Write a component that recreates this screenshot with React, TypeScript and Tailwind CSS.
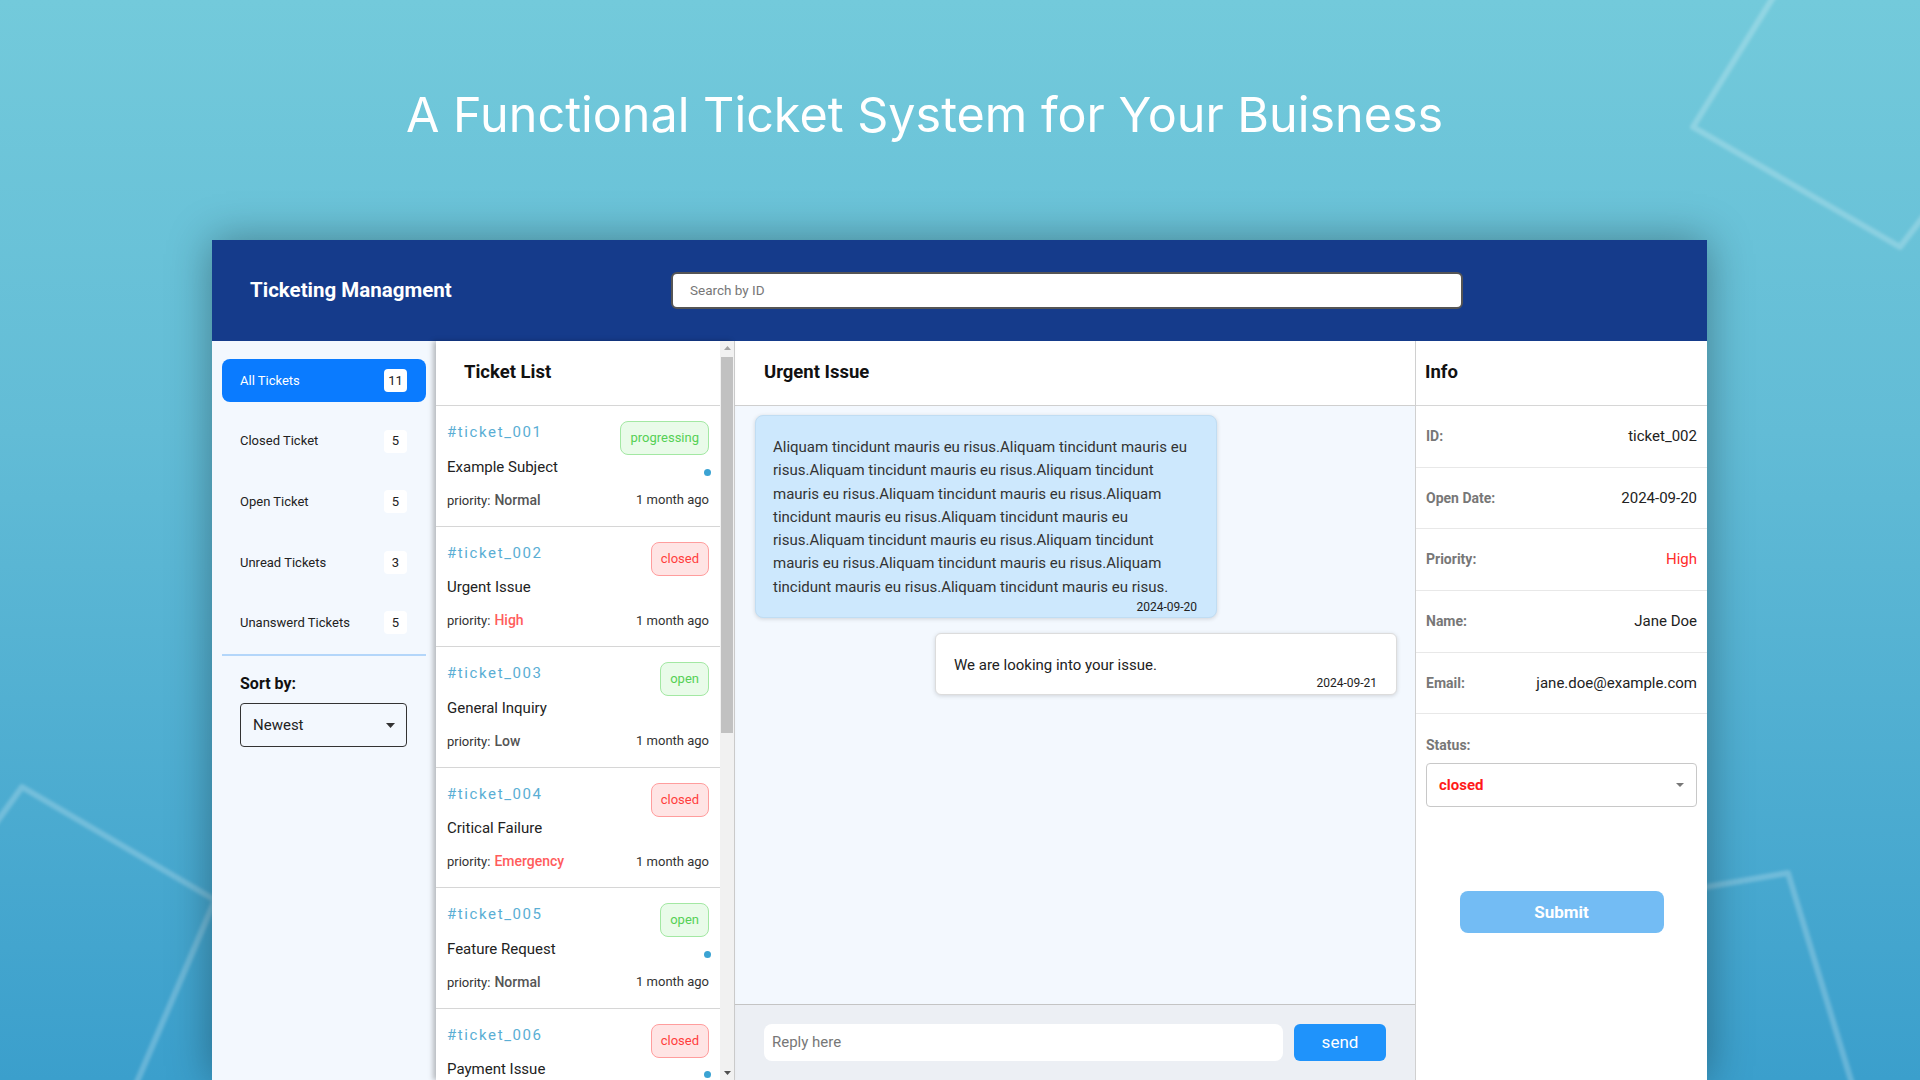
import React from "react";

type Ticket = {
  id: string;
  subject: string;
  status: "progressing" | "closed" | "open";
  priority: string;
  dot: boolean;
};

const tickets: Ticket[] = [
  { id: "#ticket_001", subject: "Example Subject", status: "progressing", priority: "Normal", dot: true },
  { id: "#ticket_002", subject: "Urgent Issue", status: "closed", priority: "High", dot: false },
  { id: "#ticket_003", subject: "General Inquiry", status: "open", priority: "Low", dot: false },
  { id: "#ticket_004", subject: "Critical Failure", status: "closed", priority: "Emergency", dot: false },
  { id: "#ticket_005", subject: "Feature Request", status: "open", priority: "Normal", dot: true },
  { id: "#ticket_006", subject: "Payment Issue", status: "closed", priority: "Normal", dot: true },
];

const nav: { label: string; count: string; active?: boolean }[] = [
  { label: "All Tickets", count: "11", active: true },
  { label: "Closed Ticket", count: "5" },
  { label: "Open Ticket", count: "5" },
  { label: "Unread Tickets", count: "3" },
  { label: "Unanswerd Tickets", count: "5" },
];

const badgeClass: Record<Ticket["status"], string> = {
  progressing: "bg-[#e9fbe9] border-[#a3e8a3] text-[#55d055]",
  open: "bg-[#e9fbe9] border-[#a3e8a3] text-[#55d055]",
  closed: "bg-[#ffe4e4] border-[#ff9d9d] text-[#ff3d3d]",
};

const prioClass: Record<string, string> = {
  Normal: "text-[#555]",
  Low: "text-[#555]",
  High: "text-[#ff5c5c]",
  Emergency: "text-[#ff5c5c]",
};

const infoRows: { label: string; value: string; red?: boolean }[] = [
  { label: "ID:", value: "ticket_002" },
  { label: "Open Date:", value: "2024-09-20" },
  { label: "Priority:", value: "High", red: true },
  { label: "Name:", value: "Jane Doe" },
  { label: "Email:", value: "jane.doe@example.com" },
];

const longText =
  "Aliquam tincidunt mauris eu risus.Aliquam tincidunt mauris eu risus.Aliquam tincidunt mauris eu risus.Aliquam tincidunt mauris eu risus.Aliquam tincidunt mauris eu risus.Aliquam tincidunt mauris eu risus.Aliquam tincidunt mauris eu risus.Aliquam tincidunt mauris eu risus.Aliquam tincidunt mauris eu risus.Aliquam tincidunt mauris eu risus.Aliquam tincidunt mauris eu risus.Aliquam tincidunt mauris eu risus.";

function Caret({ color, w = 9, h = 5 }: { color: string; w?: number; h?: number }) {
  return (
    <svg width={w} height={h} viewBox={`0 0 ${w} ${h}`}>
      <path d={`M0 0 H${w} L${w / 2} ${h} Z`} fill={color} />
    </svg>
  );
}

function Decor() {
  return (
    <svg className="absolute inset-0" width="1920" height="1080">
      <defs>
        <filter id="soft" x="-10%" y="-10%" width="120%" height="120%">
          <feGaussianBlur stdDeviation="1.6" />
        </filter>
      </defs>
      <g
        fill="none"
        stroke="rgba(255,255,255,0.22)"
        strokeWidth="6"
        strokeLinejoin="round"
        strokeLinecap="round"
        filter="url(#soft)"
      >
        <path d="M1790 -30 L1693 127 L1900 247 L1990 130" />
        <path d="M1600 905 L1788 873 L1860 1110" />
        <path d="M-12 834 L22 787 L215 900 L125 1110" />
      </g>
    </svg>
  );
}

export default function App() {
  return (
    <div className="relative w-[1920px] h-[1080px] overflow-hidden bg-[linear-gradient(180deg,#73cadb_0%,#62bcd6_40%,#3b9fcc_100%)] font-[Roboto,sans-serif]">
      <Decor />
      <div className="relative">
        <h1 className="pt-[87px] pl-[406px] text-[48.5px] leading-[56px] font-normal text-white font-[Inter,sans-serif]">
          A Functional Ticket System for Your Buisness
        </h1>

        <div className="mt-[97px] ml-[212px] w-[1495px] h-[840px] flex flex-col shadow-[0_0_40px_rgba(0,0,0,0.35)]">
          {/* Top bar */}
          <div className="h-[101px] shrink-0 bg-[#153b8b] flex items-center">
            <div className="w-[459px] pl-[38px] text-white text-[20.5px] font-bold">Ticketing Managment</div>
            <div className="w-[792px] h-[37px] bg-white rounded-[6px] border-2 border-[#555] flex items-center pl-[17px] text-[13.5px] text-[#777]">
              Search by ID
            </div>
          </div>

          {/* Body */}
          <div className="flex h-[739px]">
            {/* Sidebar */}
            <div className="w-[224px] shrink-0 bg-[#f3f8fe] px-[10px] pt-[18px]">
              <div className="flex flex-col gap-[17.6px]">
                {nav.map((n) => (
                  <div
                    key={n.label}
                    className={
                      n.active
                        ? "h-[43px] rounded-[8px] bg-[#0a7bff] flex items-center justify-between pl-[18px] pr-[19px] text-white"
                        : "h-[43px] rounded-[8px] flex items-center justify-between pl-[18px] pr-[19px] text-[#222]"
                    }
                  >
                    <span className="text-[13px]">{n.label}</span>
                    <span className="w-[23px] h-[23px] bg-white rounded-[4px] flex items-center justify-center text-[13px] text-[#222]">
                      {n.count}
                    </span>
                  </div>
                ))}
              </div>
              <div className="mt-[10px] h-[2px] bg-[#b3d6fa]" />
              <div className="pl-[18px]">
                <div className="mt-[18px] text-[16px] leading-[20px] font-bold text-[#111]">Sort by:</div>
                <div className="mt-[9px] w-[167px] h-[44px] border-[1.5px] border-[#333] rounded-[4px] flex items-center justify-between pl-[12px] pr-[11px] text-[15px] text-[#222]">
                  <span>Newest</span>
                  <Caret color="#333" />
                </div>
              </div>
            </div>

            {/* Ticket list */}
            <div className="w-[298px] shrink-0 flex bg-white relative z-10 shadow-[-3px_0_5px_rgba(0,0,0,0.25)]">
              <div className="w-[284px] flex flex-col overflow-hidden">
                <div className="h-[65px] shrink-0 border-b border-[#d6d6d6] flex items-center pl-[28px] text-[18.5px] font-bold text-[#111]">
                  Ticket List
                </div>
                {tickets.map((t) => (
                  <div key={t.id} className="h-[120.5px] shrink-0 border-b border-[#d6d6d6] px-[11px] pt-[15px]">
                    <div className="flex justify-between items-start h-[34px]">
                      <span className="mt-[1px] text-[15px] leading-[20px] tracking-[1.6px] text-[#5aaed4]">{t.id}</span>
                      <span
                        className={
                          "h-[34px] px-[9px] rounded-[8px] border flex items-center text-[13px] " + badgeClass[t.status]
                        }
                      >
                        {t.status}
                      </span>
                    </div>
                    <div className="mt-[2px] flex justify-between items-center h-[20px]">
                      <span className="text-[15px] text-[#222]">{t.subject}</span>
                      {t.dot && <span className="mt-[10px] mr-[-2px] w-[7px] h-[7px] rounded-full bg-[#3ba3d3]" />}
                    </div>
                    <div className="mt-[13px] flex justify-between items-center h-[20px] text-[13px] text-[#333]">
                      <span>
                        priority:
                        <span className={"ml-[4px] text-[14px] font-medium " + prioClass[t.priority]}>{t.priority}</span>
                      </span>
                      <span>1 month ago</span>
                    </div>
                  </div>
                ))}
              </div>
              {/* scrollbar */}
              <div className="w-[14px] bg-[#f1f1f1] flex flex-col items-center">
                <div className="h-[14px] flex items-center justify-center">
                  <svg width="7" height="4" viewBox="0 0 7 4">
                    <path d="M0 4 H7 L3.5 0 Z" fill="#a3a3a3" />
                  </svg>
                </div>
                <div className="mt-[2px] w-[12px] h-[376px] bg-[#c1c1c1]" />
                <div className="flex-1" />
                <div className="h-[14px] flex items-center justify-center">
                  <svg width="7" height="4" viewBox="0 0 7 4">
                    <path d="M0 0 H7 L3.5 4 Z" fill="#505050" />
                  </svg>
                </div>
              </div>
            </div>

            {/* Chat */}
            <div className="w-[681px] shrink-0 border-l border-[#cfcfcf] flex flex-col bg-white">
              <div className="h-[65px] shrink-0 border-b border-[#cfcfcf] flex items-center pl-[29px] text-[18.5px] font-bold text-[#111]">
                Urgent Issue
              </div>
              <div className="flex-1 bg-[#f3f8fe] pl-[20px] pr-[18px] pt-[9px] flex flex-col">
                <div className="w-[462px] rounded-[8px] bg-[#cde8fd] border border-[#c0ddf3] shadow-[0_1px_4px_rgba(0,0,0,0.15)] pl-[17px] pr-[22px] pt-[20px] pb-[2px]">
                  <p className="text-[15px] leading-[23.3px] text-[#333]">{longText}</p>
                  <div className="text-right -mr-[3px] text-[12px] leading-[16px] text-[#222]">2024-09-20</div>
                </div>
                <div className="mt-[15px] self-end w-[462px] h-[62px] rounded-[6px] bg-white border border-[#dcdcdc] shadow-[0_1px_4px_rgba(0,0,0,0.15)] pl-[18px] pr-[19px] pt-[21px]">
                  <p className="text-[15px] leading-[20px] text-[#222]">We are looking into your issue.</p>
                  <div className="text-right text-[12px] leading-[16px] text-[#222]">2024-09-21</div>
                </div>
              </div>
              <div className="h-[76px] shrink-0 border-t border-[#c4c4c4] bg-[#eceff4] flex items-start pt-[19px] pl-[29px] pr-[29px] gap-[11px]">
                <div className="flex-1 h-[37px] bg-white rounded-[8px] flex items-center pl-[8px] text-[15px] text-[#777]">
                  Reply here
                </div>
                <div className="w-[92px] h-[37px] rounded-[6px] bg-[#1f93fb] flex items-center justify-center text-white text-[17px]">
                  send
                </div>
              </div>
            </div>

            {/* Info */}
            <div className="w-[292px] shrink-0 border-l-[1.5px] border-[#d0d0d0] bg-white flex flex-col">
              <div className="h-[65px] shrink-0 border-b border-[#d6d6d6] flex items-center pl-[9px] text-[18.5px] font-bold text-[#111]">
                Info
              </div>
              {infoRows.map((r) => (
                <div
                  key={r.label}
                  className="h-[61.7px] shrink-0 border-b border-[#e8e8e8] flex items-center justify-between px-[10px]"
                >
                  <span className="text-[14px] font-bold text-[#777]">{r.label}</span>
                  <span className={r.red ? "text-[15px] text-[#ff2b2b]" : "text-[15px] text-[#222]"}>{r.value}</span>
                </div>
              ))}
              <div className="px-[10px] pt-[21px]">
                <div className="text-[14px] leading-[20px] font-bold text-[#777]">Status:</div>
                <div className="mt-[8px] h-[44px] border border-[#c8c8c8] rounded-[4px] flex items-center justify-between pl-[12px] pr-[12px]">
                  <span className="text-[15px] font-bold text-[#ff1a1a]">closed</span>
                  <Caret color="#777" w={8} h={4} />
                </div>
              </div>
              <div className="mt-[84px] mx-auto w-[204px] h-[42px] rounded-[8px] bg-[#73bcf4] flex items-center justify-center text-white text-[17px] font-bold">
                Submit
              </div>
            </div>
          </div>
        </div>
      </div>
    </div>
  );
}
